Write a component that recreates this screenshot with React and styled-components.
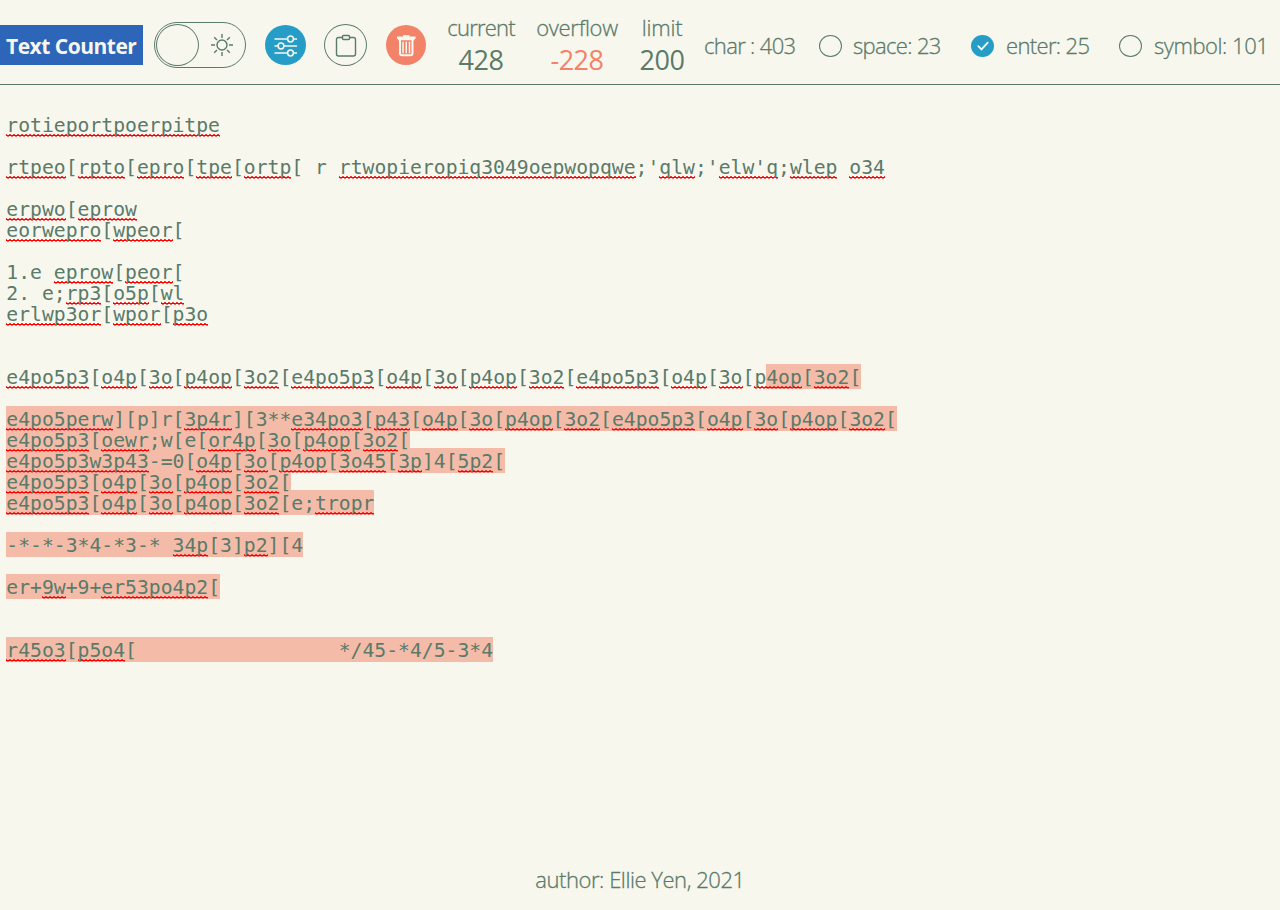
import React from "react";
import styled, { createGlobalStyle } from "styled-components";

const ink = "#5a7a6a";
const paper = "#f8f7ee";
const blue = "#269dc6";
const coral = "#f28268";

const GlobalStyle = createGlobalStyle`
  * { box-sizing: border-box; }
  body {
    margin: 0;
    background: ${paper};
    color: ${ink};
    font-family: "Open Sans", "Noto Sans", sans-serif;
    font-weight: 300;
  }
`;

const Page = styled.div`
  display: flex;
  flex-direction: column;
  height: 910px;
  overflow: hidden;
`;

const Header = styled.header`
  display: flex;
  align-items: center;
  height: 85px;
  padding-top: 5px;
  border-bottom: 1px solid ${ink};
  white-space: nowrap;
  flex: none;
`;

const Title = styled.h1`
  margin: 0 11px 0 0;
  width: 143px;
  height: 40px;
  padding-left: 6px;
  background: #2d65b8;
  color: ${paper};
  font-size: 21px;
  font-weight: 700;
  line-height: 42px;
  letter-spacing: ${(p) => p.$track}px;
`;

const Toggle = styled.button`
  display: flex;
  align-items: center;
  justify-content: space-between;
  width: 92px;
  height: 46px;
  margin: 0 19px 0 0;
  padding: 0 11px 0 1px;
  border: 1px solid ${ink};
  border-radius: 23px;
  background: none;
  color: ${ink};
`;

const Knob = styled.span`
  width: 43px;
  height: 42px;
  border: 1px solid ${ink};
  border-radius: 50%;
`;

const RoundButton = styled.button`
  display: grid;
  place-items: center;
  width: ${(p) => p.$w}px;
  height: ${(p) => p.$h}px;
  margin: 0 ${(p) => p.$gap}px 0 0;
  padding: 0;
  border: ${(p) => (p.$fill ? "none" : `1px solid ${ink}`)};
  border-radius: 50%;
  background: ${(p) => p.$fill || "none"};
  color: ${(p) => (p.$fill ? paper : ink)};
`;

const Icon = styled.svg`
  display: block;
  width: ${(p) => p.$size || 24}px;
  height: ${(p) => p.$size || 24}px;
  fill: none;
  stroke: currentColor;
  stroke-width: ${(p) => p.$stroke || 1.4};
`;

const Stat = styled.div`
  display: flex;
  flex-direction: column;
  align-items: center;
  width: ${(p) => p.$w}px;
  margin-right: ${(p) => p.$gap}px;
`;

const StatLabel = styled.span`
  margin-top: -1px;
  font-size: 22px;
  line-height: 30px;
  letter-spacing: ${(p) => p.$track}px;
  -webkit-text-stroke: 0.3px currentColor;
`;

const StatValue = styled.span`
  margin-top: 1px;
  font-size: 27px;
  font-weight: 400;
  line-height: 34px;
  letter-spacing: -0.5px;
  color: ${(p) => (p.$over ? coral : ink)};
`;

const Count = styled.span`
  width: ${(p) => p.$w}px;
  margin-right: ${(p) => p.$gap}px;
  padding-top: 1px;
  font-size: 22px;
  line-height: 30px;
  letter-spacing: ${(p) => p.$track}px;
  -webkit-text-stroke: 0.3px currentColor;
`;

const Radio = styled.span`
  display: grid;
  place-items: center;
  flex: none;
  width: 23px;
  height: 22px;
  margin: 2px ${(p) => p.$gap}px 0 0;
  border: ${(p) => (p.$on ? "none" : `1px solid ${ink}`)};
  border-radius: 50%;
  background: ${(p) => (p.$on ? blue : "none")};
  color: ${paper};
`;

const Editor = styled.main`
  position: relative;
  isolation: isolate;
  flex: 1;
  padding: 9px 6.3px;
  font-family: "DejaVu Sans Mono", monospace;
  font-size: 19.73px;
  font-weight: 400;
  white-space: pre;
`;

const Line = styled.div`
  height: 21px;
  line-height: 21px;
`;

const Excess = styled.span`
  position: relative;
  display: inline-block;
  height: 21px;
  &::before {
    content: "";
    position: absolute;
    inset: -3px 0 -1px 0;
    z-index: -1;
    background: #f4bca8;
  }
`;

/* Three stacked one-pixel dashes form the squiggle. */
const Misspelled = styled.span`
  background-image:
    linear-gradient(90deg, #f33 1px, transparent 1px 3px, #f33 3px),
    linear-gradient(90deg, #f00, #f00),
    linear-gradient(90deg, transparent 1px, #f66 1px 3px, transparent 3px);
  background-size: 4px 1px;
  background-repeat: repeat-x;
  background-position: 0 calc(100% - 2px), 0 calc(100% - 1px), 0 100%;
`;

const Footer = styled.footer`
  flex: none;
  height: 60px;
  padding-top: 14px;
  text-align: center;
  font-size: 22px;
  line-height: 30px;
  letter-spacing: ${(p) => p.$track}px;
  -webkit-text-stroke: 0.3px currentColor;
`;

const LIMIT_ROW = 13;
const LIMIT_COLUMN = 64;

const rows = [
  "",
  "rotieportpoerpitpe",
  "",
  "rtpeo[rpto[epro[tpe[ortp[ r rtwopieropiq3049oepwopqwe;'qlw;'elw'q;wlep o34",
  "",
  "erpwo[eprow",
  "eorwepro[wpeor[",
  "",
  "1.e eprow[peor[",
  "2. e;rp3[o5p[wl",
  "erlwp3or[wpor[p3o",
  "",
  "",
  "e4po5p3[o4p[3o[p4op[3o2[e4po5p3[o4p[3o[p4op[3o2[e4po5p3[o4p[3o[p4op[3o2[",
  "",
  "e4po5perw][p]r[3p4r][3**e34po3[p43[o4p[3o[p4op[3o2[e4po5p3[o4p[3o[p4op[3o2[",
  "e4po5p3[oewr;w[e[or4p[3o[p4op[3o2[",
  "e4po5p3w3p43-=0[o4p[3o[p4op[3o45[3p]4[5p2[",
  "e4po5p3[o4p[3o[p4op[3o2[",
  "e4po5p3[o4p[3o[p4op[3o2[e;tropr",
  "",
  "-*-*-3*4-*3-* 34p[3]p2][4",
  "",
  "er+9w+9+er53po4p2[",
  "",
  "",
  "r45o3[p5o4[                 */45-*4/5-3*4",
];

const isMisspelled = (word) =>
  /[a-z]/.test(word) && word.length > 1 && word !== "er";

// Splits a row into words and separators; `from` and `to` pick a slice of its columns.
function Words({ text, from = 0, to = text.length }) {
  let column = 0;
  return text.split(/([a-z0-9]+(?:'[a-z0-9]+)*)/).map((part, i) => {
    const start = column;
    column += part.length;
    const shown = part.slice(Math.max(0, from - start), Math.max(0, to - start));
    if (!shown) return null;
    return isMisspelled(part) ? (
      <Misspelled key={i}>{shown}</Misspelled>
    ) : (
      <React.Fragment key={i}>{shown}</React.Fragment>
    );
  });
}

function Row({ text, index }) {
  const cut = index < LIMIT_ROW ? text.length : index === LIMIT_ROW ? LIMIT_COLUMN : 0;
  return (
    <Line>
      <Words text={text} to={cut} />
      {cut < text.length && (
        <Excess>
          <Words text={text} from={cut} />
        </Excess>
      )}
    </Line>
  );
}

export default function App() {
  return (
    <Page>
      <GlobalStyle />
      <Header>
        <Title $track={-0.5}>Text Counter</Title>
        <Toggle aria-label="Theme">
          <Knob />
          <Icon viewBox="0 0 24 24" $size={24}>
            <circle cx="12" cy="12" r="5" />
            <path d="M12 1v4M12 19v4M1 12h4M19 12h4M4.2 4.2l2.8 2.8M17 17l2.8 2.8M4.2 19.8L7 17M17 7l2.8-2.8" />
          </Icon>
        </Toggle>
        <RoundButton $w={41} $h={40} $gap={18} $fill={blue} aria-label="Settings">
          <Icon viewBox="0.5 -1.500 24 24" $stroke={1.5}>
            <path d="M1 4.500h13M19.500 4.500h4M1 11.500h3.500M10 11.500h13.500M1 18.500h13M19.500 18.500h4" />
            <circle cx="17" cy="4.500" r="2.900" />
            <circle cx="7.500" cy="11.500" r="2.900" />
            <circle cx="17" cy="18.500" r="2.900" />
          </Icon>
        </RoundButton>
        <RoundButton $w={43} $h={42} $gap={19} aria-label="Copy">
          <Icon viewBox="0 -0.5 24 24">
            <path d="M8.500 4H4.500A2 2 0 0 0 2.500 6v14.500a2 2 0 0 0 2 2h15a2 2 0 0 0 2-2V6a2 2 0 0 0-2-2h-4" />
            <rect x="8.500" y="2" width="7" height="4" rx="1" />
          </Icon>
        </RoundButton>
        <RoundButton $w={40} $h={40} $gap={21} $fill={coral} aria-label="Delete">
          <Icon viewBox="0 0 24 24">
            <path d="M3 4.800h18.500M4 6h16.500" strokeWidth="2.400" />
            <path d="M9 3.100h6.500" strokeWidth="2" />
            <path d="M6 6v14.200a2 2 0 0 0 2 2h8.500a2 2 0 0 0 2-2V6" strokeWidth="2" />
            <path d="M9 8.700v11.500M12.250 8.700v11.500M15.500 8.700v11.500" strokeWidth="1.500" />
          </Icon>
        </RoundButton>
        <Stat $w={68} $gap={21}>
          <StatLabel $track={-0.8}>current</StatLabel>
          <StatValue>428</StatValue>
        </Stat>
        <Stat $w={82} $gap={22}>
          <StatLabel $track={-0.3}>overflow</StatLabel>
          <StatValue $over>-228</StatValue>
        </Stat>
        <Stat $w={44} $gap={20}>
          <StatLabel $track={-0.2}>limit</StatLabel>
          <StatValue>200</StatValue>
        </Stat>
        <Count $w={92} $gap={23} $track={-0.65}>char : 403</Count>
        <Radio $gap={11} />
        <Count $w={88} $gap={30} $track={-0.65}>space: 23</Count>
        <Radio $on $gap={12}>
          <Icon viewBox="0 0 22 22" $size={22}>
            <path d="M6.300 11.200l3.200 3.200 6.200-6.700" strokeWidth="1.900" strokeLinecap="round" />
          </Icon>
        </Radio>
        <Count $w={84} $gap={29} $track={-0.65}>enter: 25</Count>
        <Radio $gap={12} />
        <Count $w={114} $gap={0} $track={-0.45}>symbol: 101</Count>
      </Header>
      <Editor>
        {rows.map((text, i) => (
          <Row key={i} text={text} index={i} />
        ))}
      </Editor>
      <Footer $track={-0.45}>author: Ellie Yen, 2021</Footer>
    </Page>
  );
}
